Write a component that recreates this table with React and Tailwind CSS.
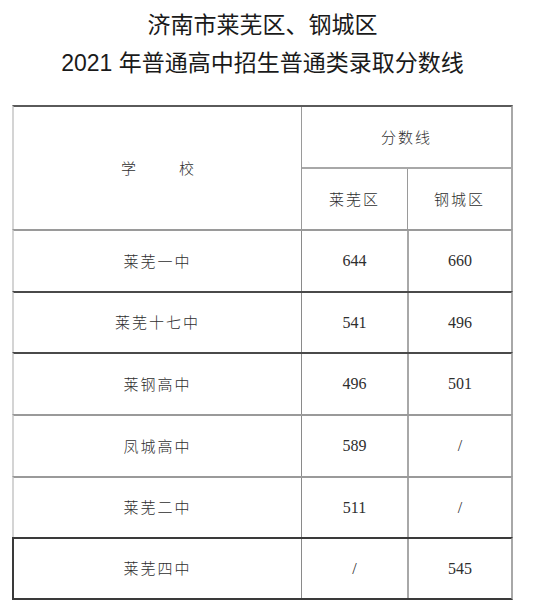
const rows = [
  { name: '莱芜一中', a: '644', b: '660', h: 'h-[62px]', top: 'border-t-[#9a9a9a]', left: 'border-l-[#d4d4d4]' },
  { name: '莱芜十七中', a: '541', b: '496', h: 'h-[61px]', top: 'border-t-[#4a4a4a]', left: 'border-l-[#d4d4d4]' },
  { name: '莱钢高中', a: '496', b: '501', h: 'h-[62px]', top: 'border-t-[#4a4a4a]', left: 'border-l-[#d4d4d4]' },
  { name: '凤城高中', a: '589', b: '/', h: 'h-[62px]', top: 'border-t-[#9a9a9a]', left: 'border-l-[#d4d4d4]' },
  { name: '莱芜二中', a: '511', b: '/', h: 'h-[61px]', top: 'border-t-[#9a9a9a]', left: 'border-l-[#d4d4d4]' },
  { name: '莱芜四中', a: '/', b: '545', h: 'h-[63px]', top: 'border-t-[#3a3a3a]', left: 'border-l-[#3a3a3a]' },
]

const cjk = "font-['Noto_Sans_CJK_SC',sans-serif]"
const title = "font-['Liberation_Sans','Noto_Sans_CJK_SC',sans-serif]"
const num = "font-['Liberation_Serif','Noto_Sans_CJK_SC',serif]"

export default function App() {
  return (
    <div className="w-[557px] h-[606px] bg-white overflow-hidden">
      {/* Title */}
      <div className={`${title} ml-[12px] w-[501px] pt-[6px] text-center text-[23px] leading-[38px] text-[#1a1a1a]`}>
        <div>济南市莱芜区、钢城区</div>
        <div>2021 年普通高中招生普通类录取分数线</div>
      </div>

      {/* Table */}
      <div className="ml-[12px] mt-[23px] w-[501px] text-[#2e2e2e]">
        {/* Header */}
        <div className="grid grid-cols-[287px_210px] border-t-2 border-t-[#5a5a5a] border-l-2 border-l-[#d4d4d4] border-r-2 border-r-[#a8a8a8]">
          <div className={`${cjk} flex items-center justify-center gap-[43px] text-[15px] font-light`}>
            <span>学</span>
            <span>校</span>
          </div>
          <div className="flex flex-col border-l border-l-[#9a9a9a]">
            <div className={`${cjk} h-[60px] flex items-center justify-center text-[15px] font-light tracking-[2px]`}>
              分数线
            </div>
            <div className="grid grid-cols-[105px_104px] h-[62px] border-t-2 border-t-[#a8a8a8]">
              <div className={`${cjk} flex items-center justify-center text-[15px] font-light tracking-[2px]`}>
                莱芜区
              </div>
              <div className={`${cjk} flex items-center justify-center text-[15px] font-light tracking-[2px] border-l border-l-[#9a9a9a]`}>
                钢城区
              </div>
            </div>
          </div>
        </div>

        {/* Body */}
        {rows.map((r, i) => (
          <div
            key={r.name}
            className={`grid grid-cols-[287px_106px_104px] ${r.h} border-t-2 ${r.top} border-l-2 ${r.left} border-r-2 border-r-[#a8a8a8] ${
              i === rows.length - 1 ? 'border-b-2 border-b-[#3a3a3a]' : ''
            }`}
          >
            <div className={`${cjk} flex items-center justify-center text-[15px] font-light tracking-[2px]`}>
              {r.name}
            </div>
            <div className={`${num} flex items-center justify-center text-[16px] border-l border-l-[#8a8a8a]`}>
              {r.a}
            </div>
            <div className={`${num} flex items-center justify-center text-[16px] border-l-2 border-l-[#a8a8a8]`}>
              {r.b}
            </div>
          </div>
        ))}
      </div>
    </div>
  )
}
